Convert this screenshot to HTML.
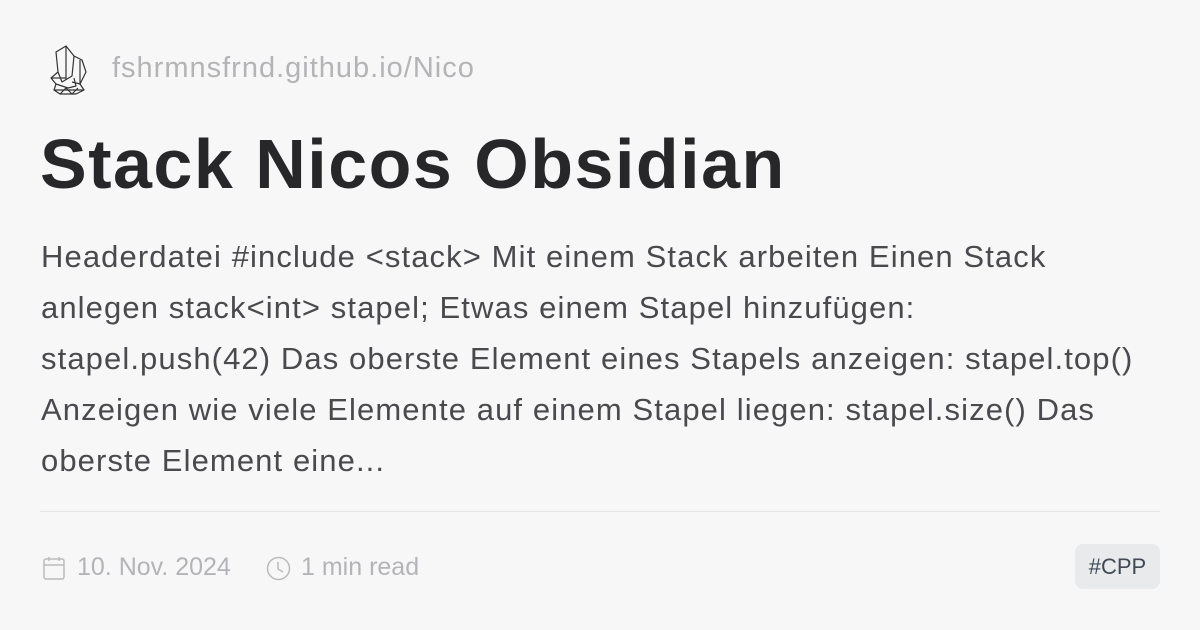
<!DOCTYPE html>
<html><head><meta charset="utf-8"><style>
*{margin:0;padding:0;box-sizing:border-box}
body{width:1200px;height:630px;background:#f7f7f8;font-family:"Liberation Sans",sans-serif;position:relative;overflow:hidden}
.site{position:absolute;left:112px;top:52px;font-size:29px;color:#b4b4b6;letter-spacing:1px}
h1{position:absolute;left:40px;top:124px;font-size:70px;font-weight:bold;color:#27272a;letter-spacing:1.5px;white-space:nowrap}
.desc{position:absolute;left:41px;top:231px;font-size:31px;line-height:51px;color:#4a4a4e;white-space:nowrap;letter-spacing:1.1px}
.hr{position:absolute;left:40px;right:40px;top:511px;height:1px;background:#e4e4e7}
.meta{position:absolute;top:553px;font-size:25px;color:#b4b4b8}
.tag{position:absolute;left:1075px;top:544px;width:85px;height:45px;border-radius:8px;background:#e9eaec;color:#3f4a55;font-size:22px;text-align:center;line-height:45px}
</style></head><body>
<svg style="position:absolute;left:48px;top:42px" width="40" height="54" viewBox="0 0 40 54" fill="none" stroke="#333" stroke-width="1.2" stroke-linejoin="round">
<path d="M8 10 L18 4 L26 14 L24 34 L14 40 L10 30 Z"/><path d="M18 4 L18 38"/><path d="M26 14 L34 18 L38 30 L32 42 L24 40"/><path d="M32 18 L32 42"/><path d="M10 30 L3 36 L8 42 L20 46 L28 44 L26 36"/><path d="M3 36 L18 36"/><path d="M8 42 L6 48 L12 52 L28 52 L36 48 L32 42"/><path d="M6 48 L36 48"/><path d="M12 52 L18 46 L24 52 L30 46"/></svg>
<div class="site">fshrmnsfrnd.github.io/Nico</div>
<h1>Stack Nicos Obsidian</h1>
<div class="desc">Headerdatei #include &lt;stack&gt; Mit einem Stack arbeiten Einen Stack<br>anlegen stack&lt;int&gt; stapel; Etwas einem Stapel hinzufügen:<br>stapel.push(42) Das oberste Element eines Stapels anzeigen: stapel.top()<br>Anzeigen wie viele Elemente auf einem Stapel liegen: stapel.size() Das<br>oberste Element eine...</div>
<div class="hr"></div>
<svg style="position:absolute;left:43px;top:556px" width="22" height="24" viewBox="0 0 22 24" fill="none" stroke="#bbb" stroke-width="1.5"><rect x="1" y="3" width="20" height="20" rx="2"/><path d="M1 9h20M6 1v4M16 1v4"/></svg>
<div class="meta" style="left:77px">10. Nov. 2024</div>
<svg style="position:absolute;left:266px;top:556px" width="25" height="25" viewBox="0 0 25 25" fill="none" stroke="#bbb" stroke-width="1.5"><circle cx="12.5" cy="12.5" r="11"/><path d="M12 6v7l5 3"/></svg>
<div class="meta" style="left:301px">1 min read</div>
<div class="tag">#CPP</div>
</body></html>
